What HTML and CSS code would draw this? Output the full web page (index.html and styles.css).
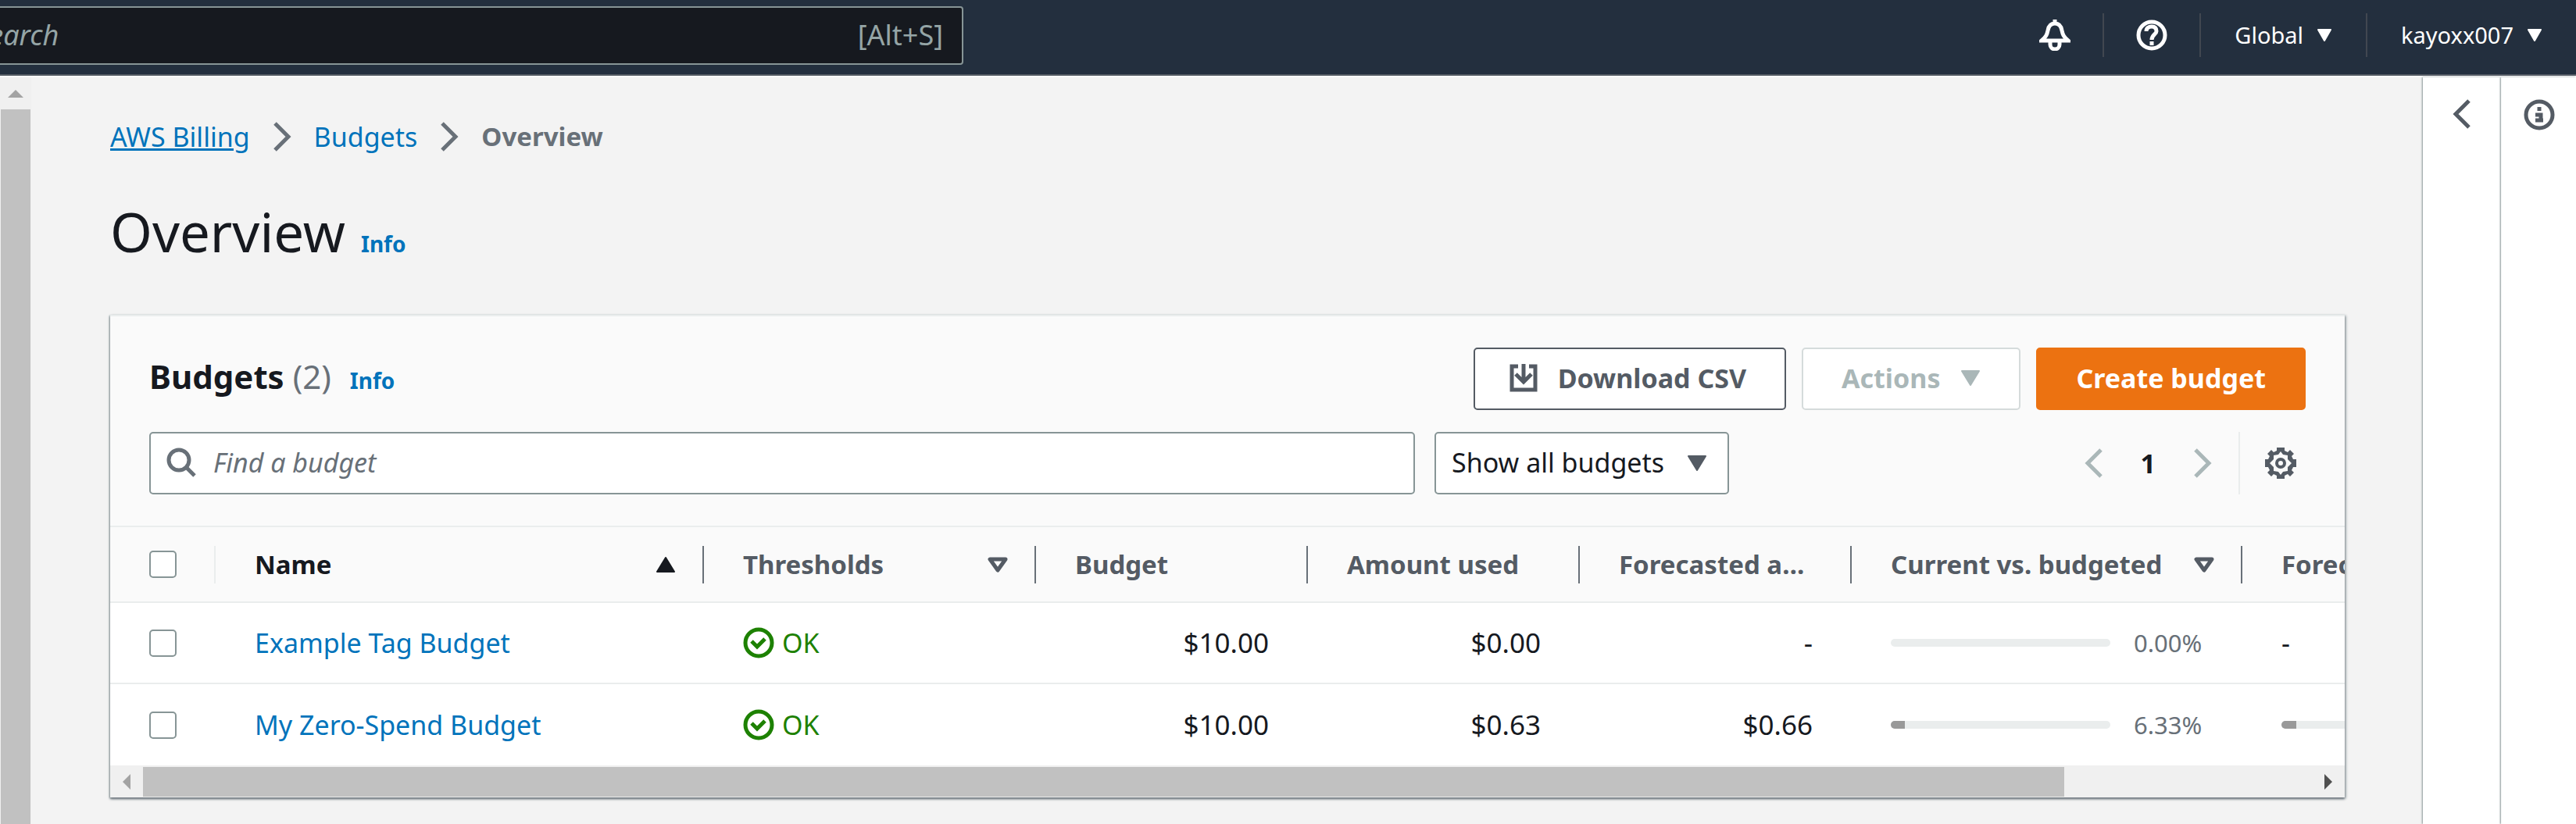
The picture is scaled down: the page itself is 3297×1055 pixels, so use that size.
FILE: index.html
```html
<!DOCTYPE html>
<html lang="en">
<head>
<meta charset="utf-8">
<title>Budgets overview</title>
<link rel="stylesheet" href="styles.css">
</head>
<body>
<header class="topbar">
  <div class="topbar-search">
    <input class="topbar-input" type="search" placeholder="Search" aria-label="Search">
    <span class="topbar-key">[Alt+S]</span>
  </div>
  <nav class="topbar-nav" aria-label="Account">
    <button class="nav-item nav-icon" type="button" aria-label="Notifications">
      <svg class="icon" viewBox="0 0 40 40"><path d="M3 27C9 22 10 19 11 14C12 8 15 5 20 5S28 8 29 14C30 19 31 22 37 27ZM20 5V0M14 28V32A6 6 0 0 0 26 32V28"/></svg>
    </button>
    <button class="nav-item nav-icon" type="button" aria-label="Help">
      <svg class="icon" viewBox="0 0 40 40"><circle cx="20" cy="20" r="17"/><path d="M13 15C13 11 16 9 20 9S26 11 26 15C26 19 20 19 20 26M20 28V33"/></svg>
    </button>
    <button class="nav-item" type="button">Global <svg class="caret-small" viewBox="0 0 20 16"><path d="M2 1H18L10 15Z"/></svg></button>
    <button class="nav-item" type="button">kayoxx007 <svg class="caret-small" viewBox="0 0 20 16"><path d="M2 1H18L10 15Z"/></svg></button>
  </nav>
</header>
<div class="shell">
  <div class="side-scroll" aria-hidden="true">
    <svg class="side-arrow" viewBox="0 0 20 10"><path d="M10 0L20 10H0Z"/></svg>
    <div class="side-thumb"></div>
  </div>
  <main class="content">
    <nav class="crumbs" aria-label="Breadcrumb">
      <a class="crumb crumb-hover" href="#billing">AWS Billing</a>
      <svg class="chevron" viewBox="0 0 24 38"><path d="M3 2L20 19L3 36"/></svg>
      <a class="crumb" href="#budgets">Budgets</a>
      <svg class="chevron" viewBox="0 0 24 38"><path d="M3 2L20 19L3 36"/></svg>
      <span class="crumb-current">Overview</span>
    </nav>
    <div class="page-head">
      <h1 class="page-title">Overview</h1>
      <a class="info-link" href="#info">Info</a>
    </div>
    <section class="card">
      <div class="card-head">
        <div class="card-row">
          <div class="card-heading">
            <h2 class="card-title">Budgets <span class="card-count">(2)</span></h2>
            <a class="info-link" href="#budgets-info">Info</a>
          </div>
          <div class="card-actions">
            <button class="btn btn-with-icon" type="button">
              <svg class="btn-icon" viewBox="0 0 36 36"><path d="M11 3H3V33H33V3H25M18 0V22M8 13L18 23L28 13"/></svg>
              Download CSV
            </button>
            <button class="btn btn-disabled" type="button" disabled>Actions <svg class="caret" viewBox="0 0 26 20"><path d="M2 1H24L13 19Z"/></svg></button>
            <button class="btn btn-primary" type="button">Create budget</button>
          </div>
        </div>
        <div class="filters">
          <label class="find">
            <svg class="find-icon" viewBox="0 0 38 38"><circle cx="16" cy="16" r="13"/><path d="M25 25L36 36"/></svg>
            <input class="find-input" type="text" placeholder="Find a budget" aria-label="Find a budget">
          </label>
          <div class="filter">
            <select class="filter-select" aria-label="Filter budgets"><option>Show all budgets</option></select>
            <svg class="caret filter-caret" viewBox="0 0 26 20"><path d="M2 1H24L13 19Z"/></svg>
          </div>
          <div class="pager">
            <button class="pager-btn" type="button" aria-label="Previous page" disabled><svg class="chevron" viewBox="0 0 24 38"><path d="M21 2L4 19L21 36"/></svg></button>
            <button class="pager-page" type="button">1</button>
            <button class="pager-btn" type="button" aria-label="Next page" disabled><svg class="chevron" viewBox="0 0 24 38"><path d="M3 2L20 19L3 36"/></svg></button>
            <button class="pager-settings" type="button" aria-label="Preferences">
              <svg class="icon gear" viewBox="0 0 40 40"><path fill-rule="evenodd" d="M15 0H25V4L29 6L32 3L37 8L34 11L36 15H40V25H36L34 29L37 32L32 37L29 34L25 36V40H15V36L11 34L8 37L3 32L6 29L4 25H0V15H4L6 11L3 8L8 3L11 6L15 4ZM20 5L17 9L11 10V15L6 20L11 25V30L17 31L20 35L23 31L29 30V25L34 20L29 15V10L23 9Z"/><path fill-rule="evenodd" d="M20 13A7 7 0 1 1 20 27A7 7 0 1 1 20 13ZM20 17A3 3 0 1 0 20 23A3 3 0 1 0 20 17Z"/></svg>
            </button>
          </div>
        </div>
      </div>
      <div class="table-wrap">
        <table class="budgets">
          <colgroup>
            <col class="col-check"><col class="col-name"><col class="col-thresholds"><col class="col-amount"><col class="col-amount"><col class="col-amount"><col class="col-bar"><col class="col-bar">
          </colgroup>
          <thead>
            <tr>
              <th class="cell-check divider-light" scope="col"><input class="check" type="checkbox" aria-label="Select all budgets"></th>
              <th class="sorted divider" scope="col"><span class="th">Name <svg class="caret" viewBox="0 0 26 20"><path d="M2 19H24L13 1Z"/></svg></span></th>
              <th class="divider" scope="col"><span class="th">Thresholds <svg class="caret caret-open" viewBox="0 0 26 20"><path d="M3 3H23L13 17Z"/></svg></span></th>
              <th class="divider" scope="col">Budget</th>
              <th class="divider" scope="col">Amount used</th>
              <th class="divider" scope="col"><span class="clip">Forecasted amount</span></th>
              <th class="divider" scope="col"><span class="th">Current vs. budgeted <svg class="caret caret-open" viewBox="0 0 26 20"><path d="M3 3H23L13 17Z"/></svg></span></th>
              <th scope="col">Forecasted vs. budgeted</th>
            </tr>
          </thead>
          <tbody>
            <tr>
              <td class="cell-check"><input class="check" type="checkbox" aria-label="Select Example Tag Budget"></td>
              <td><a class="link" href="#example">Example Tag Budget</a></td>
              <td><span class="status"><svg class="icon" viewBox="0 0 40 40"><circle cx="20" cy="20" r="17"/><path d="M11 18L18 25L28 15"/></svg>OK</span></td>
              <td class="num">$10.00</td>
              <td class="num">$0.00</td>
              <td class="num">-</td>
              <td><span class="usage"><span class="bar"></span><span class="pct">0.00%</span></span></td>
              <td>-</td>
            </tr>
            <tr>
              <td class="cell-check"><input class="check" type="checkbox" aria-label="Select My Zero-Spend Budget"></td>
              <td><a class="link" href="#zero-spend">My Zero-Spend Budget</a></td>
              <td><span class="status"><svg class="icon" viewBox="0 0 40 40"><circle cx="20" cy="20" r="17"/><path d="M11 18L18 25L28 15"/></svg>OK</span></td>
              <td class="num">$10.00</td>
              <td class="num">$0.63</td>
              <td class="num">$0.66</td>
              <td><span class="usage"><span class="bar"><span class="bar-fill" style="width:6.33%"></span></span><span class="pct">6.33%</span></span></td>
              <td><span class="usage"><span class="bar"><span class="bar-fill" style="width:6.6%"></span></span></span></td>
            </tr>
          </tbody>
        </table>
      </div>
      <div class="hscroll" aria-hidden="true">
        <svg class="hscroll-arrow" viewBox="0 0 10 20"><path d="M10 0V20L0 10Z"/></svg>
        <div class="hscroll-track"><div class="hscroll-thumb"></div></div>
        <svg class="hscroll-arrow hscroll-next" viewBox="0 0 10 20"><path d="M0 0V20L10 10Z"/></svg>
      </div>
    </section>
  </main>
  <aside class="panels">
    <button class="panel-btn" type="button" aria-label="Open panel"><svg class="chevron" viewBox="0 0 24 38"><path d="M21 2L4 19L21 36"/></svg></button>
    <button class="panel-btn" type="button" aria-label="Info panel"><svg class="icon" viewBox="0 0 40 40"><circle cx="20" cy="20" r="17"/><path d="M20 10V15M15 20H22V27M15 27H25"/></svg></button>
  </aside>
</div>
</body>
</html>
```
FILE: styles.css
```css
* { box-sizing: border-box; }

body {
  margin: 0;
  height: 100vh;
  overflow: hidden;
  display: flex;
  flex-direction: column;
  background: #f3f3f3;
  color: #16191f;
  font-family: "Noto Sans", sans-serif;
  font-size: 34px;
  line-height: 48px;
}

button, input, select { font: inherit; color: inherit; margin: 0; }
button { background: none; border: 0; padding: 0; }
svg { flex: none; fill: none; stroke: currentColor; display: block; }
a { color: #0073bb; text-decoration: none; }

.icon { width: 40px; height: 40px; stroke-width: 5; }
.gear { fill: currentColor; stroke: none; }
.chevron { width: 24px; height: 38px; stroke-width: 5; }
.caret { width: 26px; height: 20px; fill: currentColor; stroke-width: 2; stroke-linejoin: round; }
.caret-open { fill: none; stroke-width: 5; }
.caret-small { width: 20px; height: 16px; fill: currentColor; stroke-width: 2; stroke-linejoin: round; }

/* Top bar */
.topbar {
  flex: none;
  height: 97px;
  display: flex;
  justify-content: space-between;
  background: #232f3e;
  border-bottom: 2px solid #545b64;
  color: #fff;
}
.topbar-search {
  width: 1273px;
  height: 75px;
  margin: 8px 0 0 -40px;
  padding: 0 24px 2px 6px;
  display: flex;
  align-items: center;
  background: #16191f;
  border: 2px solid #879596;
  border-radius: 4px;
  color: #95a5a6;
  font-size: 36px;
}
.topbar-input { flex: 1; min-width: 0; background: none; border: 0; padding: 0; outline: 0; }
.topbar-input::placeholder { color: #95a5a6; font-style: italic; opacity: 1; }
.topbar-nav { display: flex; align-items: center; height: 90px; font-size: 29px; }
.nav-item { height: 56px; padding: 0 43px; display: flex; align-items: center; gap: 17px; border-left: 2px solid #414750; }
.nav-icon { padding: 0 41px; }
.nav-item:first-child { border-left: 0; }

/* Page body */
.shell { flex: 1; display: flex; min-height: 0; border-top: 2px solid #fafafa; }
.side-scroll { flex: none; width: 40px; padding: 16px 1px 0; display: flex; flex-direction: column; align-items: center; gap: 15px; background: #f0f0f0; }
.side-arrow { width: 20px; height: 10px; fill: #a3a3a3; stroke: none; }
.side-thumb { flex: 1; width: 100%; background: #c1c1c1; }
.content { flex: 1; min-width: 0; padding: 52px 100px 0 101px; }

.crumbs { display: flex; align-items: center; gap: 29px; color: #687078; }
.crumb-hover { text-decoration: underline; }
.crumb-current { font-size: 33px; font-weight: 700; }
.page-head { display: flex; align-items: baseline; gap: 20px; margin-top: 47px; }
.page-title { margin: 0; font-size: 69px; font-weight: 400; line-height: 100px; }
.info-link { font-size: 28px; font-weight: 700; }

/* Budgets card */
.card { margin-top: 57px; background: #fff; border-top: 2px solid #eaeded; box-shadow: 0 2px 3px #687078, 2px 1px 3px #b8c0c2, -1px 1px 2px #aab7b8; }
.card-head { padding: 40px 50px; background: #fafafa; }
.card-row { display: flex; align-items: center; justify-content: space-between; height: 80px; }
.card-heading { display: flex; align-items: baseline; gap: 24px; padding-bottom: 2px; }
.card-title { margin: 0; font-size: 42px; }
.card-count { font-weight: 400; color: #687078; }
.card-actions { display: flex; gap: 20px; }
.btn { height: 80px; padding: 0 49px 2px; display: flex; align-items: center; gap: 26px; background: #fff; border: 2px solid #545b64; border-radius: 5px; font-weight: 700; color: #545b64; }
.btn-with-icon { padding-left: 44px; }
.btn-icon { width: 36px; height: 36px; stroke-width: 5; }
.btn-disabled { border-color: #d5dbdb; color: #aab7b8; }
.btn-primary { background: #ec7211; border-color: #ec7211; color: #fff; }

.filters { display: flex; align-items: center; margin-top: 28px; }
.find { width: 1620px; height: 80px; padding: 0 20px 2px; display: flex; align-items: center; gap: 22px; background: #fff; border: 2px solid #879596; border-radius: 5px; }
.find-icon { width: 38px; height: 38px; stroke-width: 5; color: #687078; }
.find-input { flex: 1; min-width: 0; border: 0; padding: 0; outline: 0; background: none; }
.find-input::placeholder { color: #687078; font-style: italic; opacity: 1; }
.filter { margin-left: 25px; display: grid; align-items: center; width: 377px; }
.filter-select { grid-area: 1 / 1; appearance: none; height: 80px; padding: 0 20px 2px; background: #fff; border: 2px solid #879596; border-radius: 5px; }
.filter-caret { grid-area: 1 / 1; justify-self: end; margin-right: 28px; color: #545b64; pointer-events: none; }
.pager { margin-left: auto; display: flex; align-items: center; }
.pager-btn { color: #aab7b8; }
.pager-page { padding: 0 48px; font-weight: 700; }
.pager-settings { height: 80px; margin-left: 34px; padding: 0 12px 0 32px; border-left: 2px solid #eaeded; color: #545b64; }

/* Table */
.table-wrap { overflow: hidden; border-top: 2px solid #eaeded; }
.budgets { table-layout: fixed; width: 3229px; border-collapse: separate; border-spacing: 0; white-space: nowrap; }
.col-check { width: 135px; }
.col-name { width: 625px; }
.col-thresholds { width: 425px; }
.col-amount { width: 348px; }
.col-bar { width: 500px; }
th, td { height: 104px; padding: 0 50px; text-align: left; border-bottom: 2px solid #eaeded; }
th { height: 97px; font-size: 33px; font-weight: 700; color: #545b64; background: #fafafa no-repeat right center / 2px 48px; }
tbody tr:last-child td { border-bottom: 0; }
.divider { background-image: linear-gradient(#687078, #687078); }
.divider-light { background-image: linear-gradient(#eaeded, #eaeded); }
.sorted { color: #16191f; }
.th { display: flex; align-items: center; justify-content: space-between; margin-right: -14px; }
.clip { display: block; overflow: hidden; text-overflow: ellipsis; }
.cell-check { padding-right: 0; }
.check { display: block; appearance: none; width: 35px; height: 35px; background: #fff; border: 2px solid #879596; border-radius: 5px; }
.num { text-align: right; font-size: 35px; }
.status { display: flex; align-items: center; gap: 10px; color: #1d8102; }
.usage { display: flex; align-items: center; }
.bar { width: 281px; height: 10px; border-radius: 5px; background: #eaeded; overflow: hidden; }
.bar-fill { display: block; height: 100%; background: #999; }
.pct { margin-left: 30px; font-size: 31px; color: #687078; }

/* Horizontal scrollbar */
.hscroll { height: 41px; display: flex; align-items: center; padding: 0 16px; background: #f0f0f0; }
.hscroll-arrow { width: 10px; height: 20px; fill: #a3a3a3; stroke: none; }
.hscroll-next { fill: #505050; }
.hscroll-track { flex: 1; margin: 0 16px; display: grid; grid-template-columns: 31fr 4fr; }
.hscroll-thumb { height: 38px; background: #c1c1c1; }

/* Collapsed side panels */
.panels { flex: none; display: flex; background: #fff; color: #545b64; }
.panel-btn { width: 100px; padding-top: 28px; display: flex; justify-content: center; align-items: flex-start; box-shadow: -1px 0 2px #879596; }
.panel-btn:last-child { width: 96px; padding-left: 2px; }
```
